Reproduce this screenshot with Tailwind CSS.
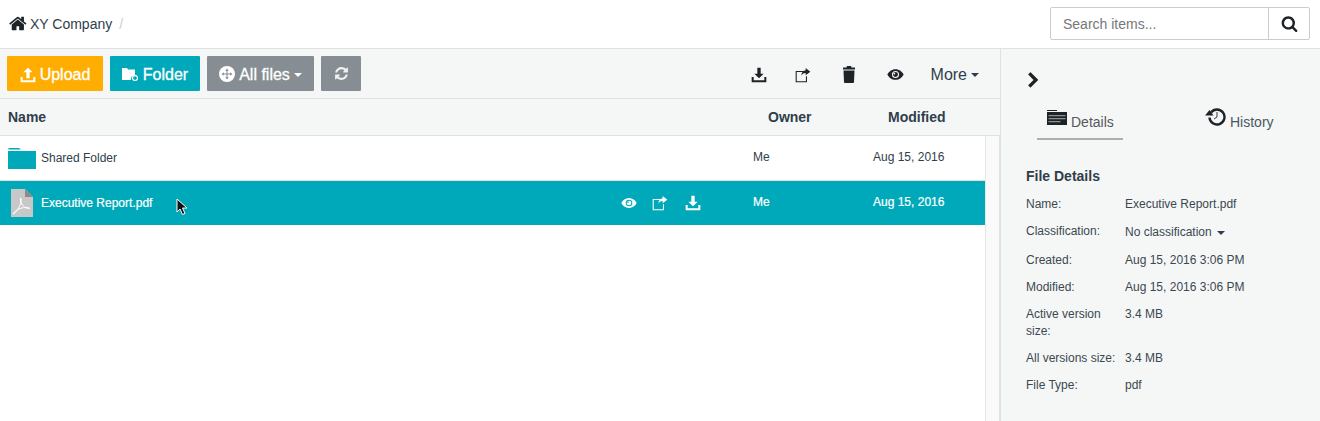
<!DOCTYPE html>
<html lang="en">
<head>
    <meta charset="UTF-8" />
    <title>XY Company - Files</title>
    <script src="https://cdn.jsdelivr.net/npm/@tailwindcss/browser@4"></script>
</head>
<body class="font-['Liberation_Sans',Arial,sans-serif] text-[#2f3e4a] bg-white">
    <svg class="hidden">
        <symbol id="i-download" viewBox="0 0 24 24"><path fill="currentColor" d="M9.500 1h5v9h4.500L12 17 5 10h4.500zM1 15h3v5h16v-5h3v8H1z"/></symbol>
        <symbol id="i-upload" viewBox="0 0 24 24"><path fill="currentColor" d="M12 1l7 7h-4.500v9h-5V8H5zM1 15h3v5h16v-5h3v8H1z"/></symbol>
        <symbol id="i-share" viewBox="0 0 24 24"><path fill="currentColor" d="M1 6h12v1.600H2.600v13.800h13.800V14H18v9H1z"/><path fill="currentColor" d="M16 1.500l7 5.500-7 5.500V9c-3 0-5 1-6.500 4 .2-4.500 2.500-7.500 6.500-8z"/></symbol>
        <symbol id="i-eye" viewBox="0 0 24 24"><path fill="currentColor" fill-rule="evenodd" d="M12 4.500C6.500 4.500 2.500 8 .5 12c2 4 6 7.500 11.500 7.500S21.500 16 23.500 12c-2-4-6-7.500-11.500-7.500zM12 7a5 5 0 1 1 0 10 5 5 0 0 1 0-10z"/><path fill="currentColor" fill-rule="evenodd" d="M12 8.500a3.500 3.500 0 1 1 0 7 3.500 3.500 0 0 1 0-7zM10.500 9.500a1.200 1.200 0 1 0 0 2.400 1.200 1.200 0 0 0 0-2.400z"/></symbol>
    </svg>

    <div class="h-[421px] flex flex-col overflow-hidden">
        <!-- top bar -->
        <header class="h-[49px] shrink-0 border-b border-[#dfe2e2] flex items-center pl-[9px] pr-[10px]">
            <svg class="w-[19px] h-[19px] text-[#1d2326] mr-[2px] mb-[1px]" viewBox="0 0 1792 1792"><path fill="currentColor" d="M1408 992v480q0 26-19 45t-45 19h-384v-384h-256v384h-384q-26 0-45-19t-19-45v-480q0-1 .5-3t.5-3l575-474 575 474q1 2 1 6zm223-69l-62 74q-8 9-21 11h-3q-13 0-21-7l-692-577-692 577q-12 8-24 7-13-2-21-11l-62-74q-8-10-7-23.5t11-21.5l719-599q32-26 76-26t76 26l244 204v-195q0-14 9-23t23-9h192q14 0 23 9t9 23v408l219 182q10 8 11 21.5t-7 23.5z"/></svg>
            <span class="text-sm">XY Company</span>
            <span class="text-sm text-[#ccc] ml-[7px]">/</span>
            <div class="ml-auto flex h-[33px] border border-[#ccc] rounded-[2px] mb-[1px]">
                <input class="w-[217px] h-full pl-3 text-sm outline-none placeholder:text-[#777]" placeholder="Search items..." />
                <button class="w-[41px] border-l border-[#ccc] flex items-center justify-center">
                    <svg class="w-[17px] h-[17px] text-[#1d2326]" viewBox="0 0 1792 1792"><path fill="currentColor" d="M1216 832q0-185-131.500-316.500t-316.500-131.500-316.500 131.500-131.500 316.500 131.500 316.500 316.500 131.500 316.500-131.500 131.500-316.500zm512 832q0 52-38 90t-90 38q-54 0-90-38l-343-342q-179 124-399 124-143 0-273.500-55.500t-225-150-150-225-55.500-273.500 55.500-273.500 150-225 225-150 273.500-55.500 273.500 55.500 225 150 150 225 55.500 273.500q0 220-124 399l343 343q37 37 37 90z"/></svg>
                </button>
            </div>
        </header>

        <div class="flex-1 flex min-h-0">
            <!-- file list -->
            <main class="w-[1000px] shrink-0 flex flex-col">
                <div class="h-[50px] shrink-0 bg-[#f5f7f7] border-b border-[#dfe2e2] flex items-center pl-[7px] pb-[1px] text-white text-base [-webkit-text-stroke:0.3px_white]">
                    <button class="w-[96px] h-[35px] pt-[3px] bg-[#ffad00] rounded-[1px] flex items-center justify-center gap-[4px]">
                        <svg class="w-4 h-4"><use href="#i-upload"/></svg>Upload
                    </button>
                    <button class="w-[90px] h-[35px] pt-[3px] ml-[7px] bg-[#00a9b9] rounded-[1px] flex items-center justify-center gap-[5px]">
                        <svg class="w-4 h-[14px] mb-[2px]" viewBox="0 0 16 14"><path fill="currentColor" d="M0 1h5l1 1.500h7V8a4 4 0 0 0-4 5H0z"/><path fill="none" stroke="currentColor" stroke-width="1.300" d="M13 8.500a2.500 2.500 0 1 0 .01 0z"/></svg>Folder
                    </button>
                    <button class="w-[107px] h-[35px] pt-[3px] ml-[7px] bg-[#868e93] rounded-[1px] flex items-center justify-center">
                        <svg class="w-4 h-4 mr-[4px] mb-[2px]" viewBox="0 0 16 16"><circle cx="8" cy="8" r="8" fill="currentColor"/><path fill="#868e93" d="M8 2.500L9.800 4.800H8.500v2.700h2.700V6.200L13.500 8l-2.300 1.800V8.500H8.500v2.700h1.300L8 13.500l-1.800-2.300h1.300V8.500H4.800v1.300L2.500 8l2.300-1.800v1.300h2.700V4.800H6.200z"/></svg>All files<span class="ml-[4px] mt-[1px] border-x-[4px] border-x-transparent border-t-[4px] border-t-white"></span>
                    </button>
                    <button class="w-[40px] h-[35px] ml-[7px] bg-[#868e93] rounded-[1px] flex items-center justify-center pt-[1px]">
                        <svg class="w-[15px] h-[15px] text-[#f0f2f2]" viewBox="0 0 1792 1792"><path fill="currentColor" d="M1639 1056q0 5-1 7-64 268-268 434.500t-478 166.500q-146 0-282.500-55t-243.500-157l-129 129q-19 19-45 19t-45-19-19-45v-448q0-26 19-45t45-19h448q26 0 45 19t19 45-19 45l-137 137q71 66 161 102t187 36q134 0 250-65t186-179q11-17 53-117 8-23 30-23h192q13 0 22.500 9.500t9.500 22.500zm25-800v448q0 26-19 45t-45 19h-448q-26 0-45-19t-19-45 19-45l138-138q-148-137-349-137-134 0-250 65t-186 179q-11 17-53 117-8 23-30 23h-199q-13 0-22.500-9.500t-9.500-22.500v-7q65-268 270-434.500t480-166.500q146 0 284 55.500t245 156.500l130-129q19-19 45-19t45 19 19 45z"/></svg>
                    </button>
                    <div class="ml-auto flex items-center text-[#1d2326] pr-[21px] pt-[3px] [-webkit-text-stroke:0]">
                        <svg class="w-4 h-4"><use href="#i-download"/></svg>
                        <svg class="w-4 h-4 ml-[28px]"><use href="#i-share"/></svg>
                        <svg class="w-[14px] h-[17px] ml-[31px]" viewBox="0 0 14 17"><path fill="currentColor" d="M5 0h4l.5 1.500H13V3.500H1V1.500h3.500zM1.500 4.500h11L12 16a1 1 0 0 1-1 1H3a1 1 0 0 1-1-1z"/></svg>
                        <svg class="w-[17px] h-[17px] ml-[31px]"><use href="#i-eye"/></svg>
                        <span class="ml-[27px] text-[#2f3e4a]">More</span>
                        <span class="ml-[4px] mt-[1px] border-x-[4px] border-x-transparent border-t-[4px] border-t-[#2f3e4a]"></span>
                    </div>
                </div>

                <div class="h-[37px] shrink-0 bg-[#f5f7f7] border-b border-[#dfe2e2] flex items-center text-sm font-bold">
                    <div class="flex-1 pl-2">Name</div>
                    <div class="w-[120px] pl-[15px]">Owner</div>
                    <div class="w-[127px] pl-[15px]">Modified</div>
                </div>

                <div class="flex-1 flex min-h-0">
                    <div class="w-[986px] border-r border-[#e6e6e6] relative">
                        <div class="h-[45px] border-b border-[#dfe2e2] flex items-center text-xs">
                            <div class="flex-1 flex items-center pl-2">
                                <svg class="w-[28px] h-[21px] mr-[5px]" viewBox="0 0 28 21"><path fill="#00a9b9" d="M0 1.500Q0 0 1.500 0h9Q12 0 13 1.500h-13zM0 3h28v18H0z"/></svg>
                                Shared Folder
                            </div>
                            <div class="w-[120px] mb-[2px]">Me</div>
                            <div class="w-[112px] mb-[2px]">Aug 15, 2016</div>
                        </div>
                        <div class="h-[44px] bg-[#00a9b9] text-white flex items-center text-xs [-webkit-text-stroke:0.2px_white]">
                            <div class="flex-1 flex items-center">
                                <svg class="ml-[11px] w-[22px] h-[28px] mr-2" viewBox="0 0 22 28"><path fill="#c8c8c8" d="M0 0h14l8 8v20H0z"/><path fill="#8c8c8c" d="M14 0l8 8h-8z"/><path fill="none" stroke="#fff" stroke-width="1" d="M2 25c3-1 6-6 7.500-10 .8-2.500 1-5 .3-6-.8 0-.8 3 1 6s5 5 8 4.500c0-1.200-4-1.500-8-.5s-7 3-8.800 6z"/></svg>
                                Executive Report.pdf
                                <div class="ml-auto flex items-center mr-[52px] text-white">
                                    <svg class="w-4 h-4"><use href="#i-eye"/></svg>
                                    <svg class="w-4 h-4 ml-[15px]"><use href="#i-share"/></svg>
                                    <svg class="w-4 h-4 ml-[17px]"><use href="#i-download"/></svg>
                                </div>
                            </div>
                            <div class="w-[120px] mb-[2px]">Me</div>
                            <div class="w-[112px] mb-[2px]">Aug 15, 2016</div>
                        </div>
                        <svg class="absolute left-[176px] top-[62px] w-[13px] h-[18px]" viewBox="0 0 13 18"><path fill="#111" stroke="#fff" stroke-width="1" d="M1 1v13l3-3 2.500 5.500 2.500-1L6.500 10H11z"/></svg>
                    </div>
                    <!-- scrollbar track -->
                    <div class="flex-1 bg-[#fafafa] border-r border-[#e2e2e2]"></div>
                </div>
            </main>

            <!-- details panel -->
            <aside class="flex-1 bg-[#f5f7f7] border-l border-[#dfe2e2] text-xs">
                <svg class="w-[17px] h-[17px] ml-[24px] mt-[23px] text-[#1d2326]" viewBox="0 0 1792 1792"><path fill="currentColor" d="M1363 877l-742 742q-19 19-45 19t-45-19l-166-166q-19-19-19-45t19-45l531-531-531-531q-19-19-19-45t19-45l166-166q19-19 45-19t45 19l742 742q19 19 19 45t-19 45z"/></svg>
                <div class="flex mt-[21px] text-sm">
                    <div class="ml-[36px] w-[86px] h-[30px] border-b-2 border-[#adadad] flex items-start pl-[10px] text-[#55595c]">
                        <svg class="w-[20px] h-[16px] mr-[4px]" viewBox="0 0 20 16"><path fill="#1d2326" d="M0 0h10v1H0zM0 2h20v13H0z"/><path fill="#8e9091" d="M1.500 5h17v1.200h-17zM1.500 8h17v1.200h-17zM1.500 11h12v1.200h-12z"/></svg>
                        <span class="mt-[2px]">Details</span>
                    </div>
                    <div class="ml-[82px] flex items-start text-[#4a5660]">
                        <svg class="w-[21px] h-[18px] mr-[4px] text-[#1d2326] -mt-[2px]" viewBox="0 0 21 18"><path fill="none" stroke="currentColor" stroke-width="2.400" d="M6 4.500a7.500 7.500 0 1 1-1.500 5"/><path fill="currentColor" d="M0 7.500h8.500L4.500 2z"/><path fill="none" stroke="currentColor" stroke-width=".9" d="M12 4v5l-3 2"/></svg>
                        <span class="mt-[2px]">History</span>
                    </div>
                </div>
                <div class="pl-[25px] pt-[26px]">
                    <h3 class="text-sm font-bold">File Details</h3>
                    <dl class="mt-[10px] grid grid-cols-[99px_1fr] gap-y-[10px] leading-[17px] text-[#3c4850]">
                        <dt>Name:</dt><dd>Executive Report.pdf</dd>
                        <dt>Classification:</dt><dd class="flex items-center h-[19px]">No classification<span class="ml-[5px] mt-[1px] border-x-[4px] border-x-transparent border-t-[4px] border-t-[#2f3e4a]"></span></dd>
                        <dt>Created:</dt><dd>Aug 15, 2016 3:06 PM</dd>
                        <dt>Modified:</dt><dd>Aug 15, 2016 3:06 PM</dd>
                        <dt>Active version size:</dt><dd>3.4 MB</dd>
                        <dt>All versions size:</dt><dd>3.4 MB</dd>
                        <dt>File Type:</dt><dd>pdf</dd>
                    </dl>
                </div>
            </aside>
        </div>
    </div>
</body>
</html>
